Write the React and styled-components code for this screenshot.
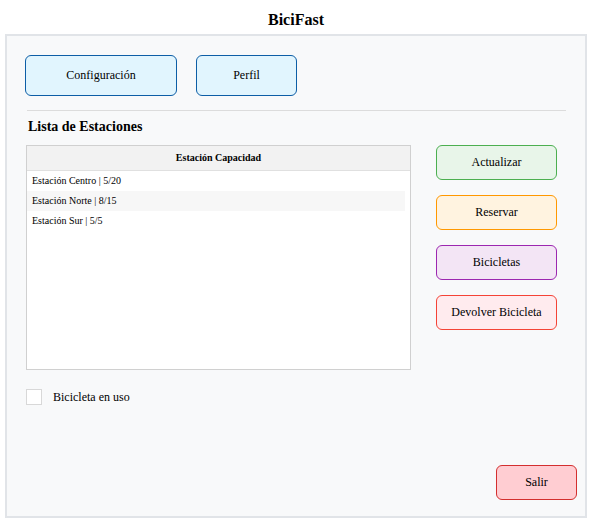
import React from 'react'
import styled, { createGlobalStyle } from 'styled-components'

const Global = createGlobalStyle`
  html, body { margin: 0; padding: 0; background: #fff; }
`

const Page = styled.div`
  font-family: "Liberation Serif", "Times New Roman", serif;
  color: #000;

  button {
    font-family: "Liberation Serif", "Times New Roman", serif;
  }
`

const Title = styled.h1`
  margin: 0;
  height: 34px;
  line-height: 40px;
  text-align: center;
  font-size: 16px;
  font-weight: bold;
`

const Panel = styled.div`
  box-sizing: border-box;
  margin: 0 5px;
  width: 582px;
  height: 484px;
  border: 2px solid #e1e4e8;
  background: #f8f9fa;
  padding: 19px 8px 16px 18px;
  display: flex;
  flex-direction: column;
`

const TopBar = styled.div`
  display: flex;
  gap: 19px;
`

const Button = styled.button`
  box-sizing: border-box;
  width: ${p => p.$w || 120}px;
  height: ${p => p.$h || 35}px;
  border: 1px solid ${p => p.$border};
  background: ${p => p.$bg};
  border-radius: 6px;
  font-size: 12px;
  color: #000;
  padding: 0;
  cursor: pointer;
`

const Divider = styled.hr`
  margin: 14px 0 0 2px;
  border: none;
  border-top: 1px solid #dcdcdc;
  width: 539px;
`

const SectionTitle = styled.h2`
  margin: 7px 0 0 3px;
  font-size: 14px;
  font-weight: bold;
  line-height: 18px;
`

const Main = styled.div`
  display: flex;
  margin-top: 9px;
  margin-left: 1px;
  gap: 25px;
`

const Table = styled.div`
  box-sizing: border-box;
  width: 385px;
  height: 225px;
  border: 1px solid #d0d0d0;
  background: #fff;
`

const Header = styled.div`
  height: 24px;
  line-height: 24px;
  background: #f2f2f2;
  border-bottom: 1px solid #e0e0e0;
  text-align: center;
  font-size: 10px;
  font-weight: bold;
`

const Row = styled.div`
  height: 20px;
  line-height: 20px;
  margin: 0 5px 0 0;
  padding-left: 5px;
  font-size: 10px;
  background: ${p => (p.$alt ? '#f7f7f7' : '#fff')};
`

const Side = styled.div`
  display: flex;
  flex-direction: column;
  gap: 15px;
`

const CheckRow = styled.label`
  display: flex;
  align-items: center;
  margin: 19px 0 0 1px;
  font-size: 12px;
`

const Box = styled.span`
  box-sizing: border-box;
  width: 16px;
  height: 16px;
  border: 1px solid #d8d8d8;
  background: #fff;
  margin-right: 11px;
`

const Footer = styled.div`
  margin-top: auto;
  display: flex;
  justify-content: flex-end;
`

const stations = [
  'Estación Centro | 5/20',
  'Estación Norte | 8/15',
  'Estación Sur | 5/5',
]

const actions = [
  { label: 'Actualizar', bg: '#e8f5e9', border: '#4caf50' },
  { label: 'Reservar', bg: '#fff3e0', border: '#ff9800' },
  { label: 'Bicicletas', bg: '#f3e5f5', border: '#9c27b0' },
  { label: 'Devolver Bicicleta', bg: '#ffebee', border: '#f44336' },
]

export default function App () {
  return (
    <Page>
      <Global />
      <Title>BiciFast</Title>
      <Panel>
        <TopBar>
          <Button $w={152} $h={41} $bg='#e1f5fe' $border='#0d5ea6'>Configuración</Button>
          <Button $w={101} $h={41} $bg='#e1f5fe' $border='#0d5ea6'>Perfil</Button>
        </TopBar>
        <Divider />
        <SectionTitle>Lista de Estaciones</SectionTitle>
        <Main>
          <Table>
            <Header>Estación Capacidad</Header>
            {stations.map((s, i) => (
              <Row key={s} $alt={i % 2 === 1}>{s}</Row>
            ))}
          </Table>
          <Side>
            {actions.map(a => (
              <Button key={a.label} $w={121} $h={35} $bg={a.bg} $border={a.border}>{a.label}</Button>
            ))}
          </Side>
        </Main>
        <CheckRow>
          <Box />
          Bicicleta en uso
        </CheckRow>
        <Footer>
          <Button $w={81} $h={35} $bg='#ffcdd2' $border='#d32f2f'>Salir</Button>
        </Footer>
      </Panel>
    </Page>
  )
}
